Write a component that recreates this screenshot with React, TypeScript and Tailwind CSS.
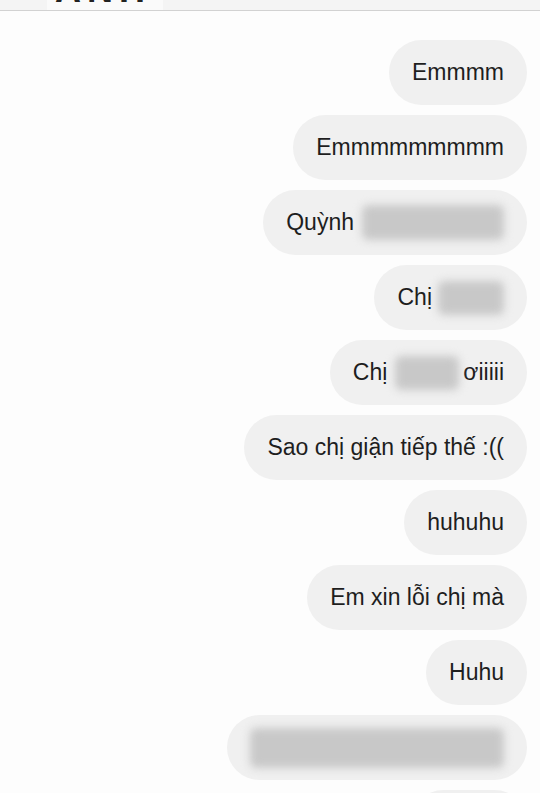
import React from "react";

const Blur = ({ w, h = 34 }: { w: number; h?: number }) => (
  <span
    className="inline-block bg-[#c8c8c8] blur-[4px] rounded-md"
    style={{ width: w, height: h }}
  />
);

const Bubble = ({ children }: { children: React.ReactNode }) => (
  <div className="h-[65px] shrink-0 rounded-full bg-[#f0f0f0] px-[23px] flex items-center text-[23px] text-[#1e1e1e] leading-none whitespace-nowrap">
    {children}
  </div>
);

export default function App() {
  return (
    <div
      className="w-[540px] h-[793px] overflow-hidden bg-[#fdfdfd] flex flex-col"
      style={{ fontFamily: '"Liberation Sans", Arial, sans-serif' }}
    >
      <div className="h-[11px] shrink-0 bg-[#f4f4f4] border-b border-[#d2d2d2] overflow-hidden flex">
        <div className="ml-[47px] w-[116px] h-[10px] bg-[#fafafa] overflow-hidden">
          <div className="-mt-[28px] ml-[8px] text-[36px] leading-none font-bold text-[#222] tracking-[6px]">
            ANH
          </div>
        </div>
      </div>
      <div className="flex flex-col items-end gap-[10px] pt-[29px] pr-[13px]">
        <Bubble>Emmmm</Bubble>
        <Bubble>Emmmmmmmmm</Bubble>
        <Bubble>
          <span>Quỳnh</span>
          <span className="ml-[8px] flex"><Blur w={142} h={35} /></span>
        </Bubble>
        <Bubble>
          <span>Chị</span>
          <span className="ml-[6px] flex"><Blur w={66} /></span>
        </Bubble>
        <Bubble>
          <span>Chị</span>
          <span className="ml-[8px] flex"><Blur w={64} /></span>
          <span className="ml-[4px]">ơiiiii</span>
        </Bubble>
        <Bubble>Sao chị giận tiếp thế :((</Bubble>
        <Bubble>huhuhu</Bubble>
        <Bubble>Em xin lỗi chị mà</Bubble>
        <Bubble>Huhu</Bubble>
        <Bubble>
          <span className="flex"><Blur w={254} h={40} /></span>
        </Bubble>
        <Bubble>
          <span className="flex"><Blur w={70} /></span>
        </Bubble>
      </div>
    </div>
  );
}
